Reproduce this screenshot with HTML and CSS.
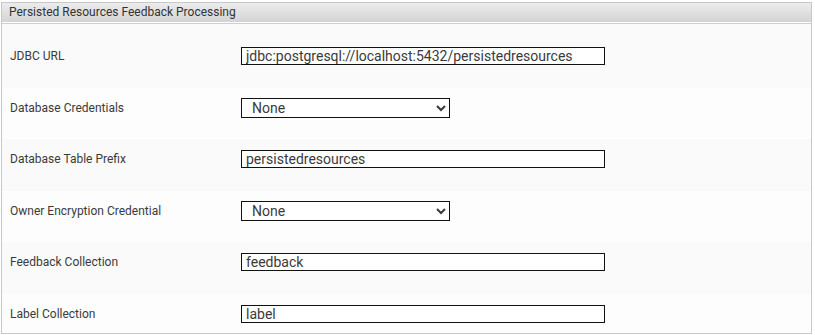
FILE: index.html
```html
<!DOCTYPE html>
<html lang="en">
  <head>
    <meta charset="UTF-8" />
    <title>Persisted Resources Feedback Processing</title>
    <link rel="stylesheet" href="styles.css">
  </head>
  <body>
    <div class="panel">
      <div class="panel-header">Persisted Resources Feedback Processing</div>
      <div class="panel-body">
        <div class="row first">
          <label>JDBC URL</label>
          <input class="text" type="text" value="jdbc:postgresql://localhost:5432/persistedresources">
        </div>
        <div class="row">
          <label>Database Credentials</label>
          <select class="choice"><option>None</option></select>
        </div>
        <div class="row">
          <label>Database Table Prefix</label>
          <input class="text" type="text" value="persistedresources">
        </div>
        <div class="row">
          <label>Owner Encryption Credential</label>
          <select class="choice"><option>None</option></select>
        </div>
        <div class="row">
          <label>Feedback Collection</label>
          <input class="text" type="text" value="feedback">
        </div>
        <div class="row last">
          <label>Label Collection</label>
          <input class="text" type="text" value="label">
        </div>
      </div>
    </div>
  </body>
</html>
```

FILE: styles.css
```css
body {
  font-family: Roboto, "Liberation Sans", sans-serif;
  margin: 0;
  padding: 0;
  background: #fff;
  color: #333;
}
.panel {
  margin: 2px 0 0 1px;
  width: 809px;
  border: 1px solid #c8c8c8;
  background: #fcfcfc;
}
.panel-header {
  font-size: 12px;
  height: 19px;
  line-height: 19px;
  padding-left: 7px;
  background: linear-gradient(#ececec, #d4d4d4);
  border-bottom: 1px solid #fff;
  box-shadow: 0 1px 0 #cfcfcf;
  color: #333;
}
.panel-body {
  margin-top: 1px;
}
.row {
  display: flex;
  align-items: center;
  height: 20px;
  padding: 10px 0 21.5px 8px;
}
.row:nth-child(odd) {
  background: #fafafa;
}
.row:nth-child(even) {
  background: #fdfdfd;
}
.row.first {
  padding-top: 22px;
}
.row.last {
  padding-bottom: 9px;
}
.row label {
  width: 232px;
  font-size: 12px;
  color: #3a3a3a;
}
.text {
  box-sizing: border-box;
  width: 364px;
  height: 18px;
  margin: 0 0 0 -1px;
  padding: 0 4px;
  border: 1px solid #111;
  font-family: Roboto, "Liberation Sans", sans-serif;
  font-size: 14px;
  color: #3a3a3a;
  background: #fff;
  outline: none;
}
.choice {
  box-sizing: border-box;
  width: 209px;
  height: 20px;
  margin: 0 0 0 -1px;
  padding: 0 6px;
  border: 1px solid #111;
  border-radius: 0;
  font-family: Roboto, "Liberation Sans", sans-serif;
  font-size: 14px;
  color: #3a3a3a;
  background: #fff;
}
```
